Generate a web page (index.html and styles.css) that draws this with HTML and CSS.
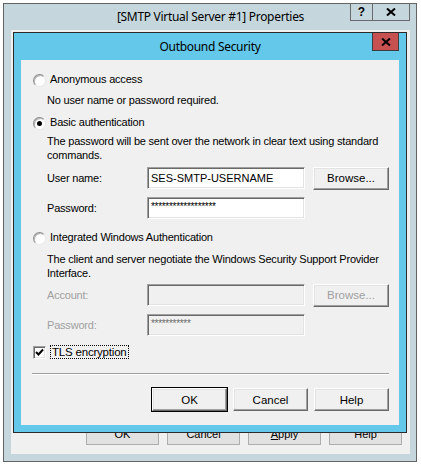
FILE: index.html
```html
<!DOCTYPE html>
<html lang="en">

<head>
  <meta charset="UTF-8">
  <meta name="viewport" content="width=device-width, initial-scale=1.0">
  <title>Outbound Security</title>
  <link rel="stylesheet" href="styles.css">
</head>

<body>
  <div class="desktop">

    <!-- Parent window: SMTP virtual server properties -->
    <div class="window props">
      <div class="titlebar">
        <span class="title">[SMTP Virtual Server #1] Properties</span>
        <div class="caption-btns">
          <span class="cap cap-help">?</span>
          <span class="cap cap-close">
            <svg width="10" height="8" viewBox="0 0 10 8"><path d="M1 0.5 L9 7.5 M9 0.5 L1 7.5" stroke="#000" stroke-width="2" fill="none"/></svg>
          </span>
        </div>
      </div>
      <div class="client">
        <div class="back-buttons">
          <button class="back-btn">OK</button>
          <button class="back-btn">Cancel</button>
          <button class="back-btn"><u>A</u>pply</button>
          <button class="back-btn">Help</button>
        </div>
      </div>
    </div>

    <!-- Modal: Outbound Security -->
    <div class="window dialog">
      <div class="dlg-titlebar">
        <span class="dlg-title">Outbound Security</span>
        <span class="dlg-close">
          <svg width="10" height="8" viewBox="0 0 10 8"><path d="M1 0.5 L9 7.5 M9 0.5 L1 7.5" stroke="#000" stroke-width="2" fill="none"/></svg>
        </span>
      </div>

      <div class="dlg-client">
        <div class="option first">
          <span class="radio"></span>
          <span>Anonymous access</span>
        </div>
        <p class="desc desc-anon">No user name or password required.</p>

        <div class="option basic">
          <span class="radio checked"></span>
          <span>Basic authentication</span>
        </div>
        <p class="desc desc-basic">The password will be sent over the network in clear text using standard commands.</p>

        <div class="field first-field">
          <label>User name:</label>
          <div class="textbox">SES-SMTP-USERNAME</div>
          <button class="btn">Browse...</button>
        </div>
        <div class="field">
          <label>Password:</label>
          <div class="textbox stars">******************</div>
        </div>

        <div class="option integrated">
          <span class="radio"></span>
          <span>Integrated Windows Authentication</span>
        </div>
        <p class="desc desc-int">The client and server negotiate the Windows Security Support Provider Interface.</p>

        <div class="field disabled first-field small-gap">
          <label>Account:</label>
          <div class="textbox"></div>
          <button class="btn" disabled>Browse...</button>
        </div>
        <div class="field disabled">
          <label>Password:</label>
          <div class="textbox stars">***********</div>
        </div>

        <div class="check-row">
          <span class="checkbox">
            <svg width="9" height="9" viewBox="0 0 9 9"><path d="M1 4 L3.5 6.5 L8 1.5" stroke="#000" stroke-width="2" fill="none"/></svg>
          </span>
          <span class="focus-label">TLS encryption</span>
        </div>

        <div class="separator"></div>

        <div class="dlg-buttons">
          <button class="btn default">OK</button>
          <button class="btn">Cancel</button>
          <button class="btn">Help</button>
        </div>
      </div>
    </div>

  </div>
</body>

</html>
```

FILE: styles.css
```css
body {
  margin: 0;
  background: #ffffff;
  font-family: 'Liberation Sans', Arial, sans-serif;
  font-size: 11px;
  color: #000;
}

.desktop {
  position: relative;
  width: 421px;
  height: 466px;
}

.window {
  box-sizing: border-box;
}

/* parent window */
.props {
  position: absolute;
  left: 3px;
  top: 3px;
  width: 414px;
  height: 459px;
  border: 1px solid #646464;
  background: #c5d7dd;
  padding: 0 6px 7px 7px;
  display: flex;
  flex-direction: column;
}

.titlebar {
  height: 26px;
  text-align: center;
  position: relative;
}

.title {
  font-family: 'Noto Sans', sans-serif;
  font-size: 12px;
  letter-spacing: -0.3px;
  line-height: 26px;
  color: #000;
}

.caption-btns {
  position: absolute;
  top: 0;
  right: 0;
  display: flex;
  height: 17px;
}

.cap {
  box-sizing: border-box;
  height: 17px;
  border: 1px solid #6a6a6a;
  border-top: none;
  display: flex;
  align-items: center;
  justify-content: center;
}

.cap-help {
  width: 23px;
  font-family: 'Liberation Sans', sans-serif;
  font-weight: bold;
  font-size: 12px;
}

.cap-close {
  width: 37px;
  border-left: none;
}

.client {
  flex: 1;
  background: #f0f0f0;
  display: flex;
  flex-direction: column;
  justify-content: flex-end;
  padding-bottom: 9px;
}

.back-buttons {
  display: flex;
  justify-content: flex-end;
  gap: 8px;
  padding-right: 8px;
}

.back-btn {
  width: 73px;
  height: 23px;
  background: #e1e1e1;
  border: 1px solid #adadad;
  font-family: 'Liberation Sans', sans-serif;
  font-size: 11px;
  padding: 0;
  color: #000;
}

/* modal dialog */
.dialog {
  position: absolute;
  left: 13px;
  top: 32px;
  width: 394px;
  height: 401px;
  border: 1px solid #2b2b2b;
  background: #63c8e9;
  padding: 0 7px 7px 7px;
}

.dlg-titlebar {
  height: 27px;
  position: relative;
  text-align: center;
}

.dlg-title {
  font-family: 'Noto Sans', sans-serif;
  font-size: 12px;
  letter-spacing: -0.3px;
  line-height: 27px;
}

.dlg-close {
  position: absolute;
  top: 0;
  right: 0;
  box-sizing: border-box;
  width: 27px;
  height: 18px;
  background: #c75050;
  border: 1px solid #3d3d3d;
  border-top: none;
  display: flex;
  align-items: center;
  justify-content: center;
}

.dlg-client {
  height: 365px;
  box-sizing: border-box;
  background: #f0f0f0;
  padding: 12px 10px 0 12px;
  letter-spacing: -0.2px;
}

.option {
  display: flex;
  align-items: center;
  height: 14px;
  gap: 4px;
}

.option.basic {
  margin-top: 8px;
}

.option.integrated {
  margin-top: 11px;
}

.radio {
  box-sizing: border-box;
  width: 13px;
  height: 13px;
  border-radius: 50%;
  border: 1px solid;
  border-color: #8c8c8c #e8e8e8 #e8e8e8 #8c8c8c;
  background: #fff;
  box-shadow: inset 1px 1px 0 #b4b4b4;
  margin-top: 2px;
  position: relative;
}

.radio.checked::after {
  content: "";
  position: absolute;
  left: 3px;
  top: 3px;
  width: 5px;
  height: 5px;
  border-radius: 50%;
  background: #000;
}

.desc {
  margin: 0;
  padding-left: 14px;
  line-height: 14px;
  width: 340px;
}

.desc-anon {
  margin-top: 7px;
}

.desc-basic {
  margin-top: 5px;
}

.desc-int {
  margin-top: 8px;
}

.field {
  display: flex;
  align-items: center;
  padding-left: 14px;
  margin-top: 8px;
  height: 22px;
}

.field.first-field {
  margin-top: 5px;
}

.field.small-gap {
  margin-top: 4px;
}

.field label {
  width: 100px;
}

.textbox {
  box-sizing: border-box;
  width: 158px;
  height: 22px;
  background: #fff;
  border: 1px solid;
  border-color: #a0a0a0 #ffffff #ffffff #a0a0a0;
  box-shadow: inset 1px 1px 0 #696969, inset -1px -1px 0 #e3e3e3;
  padding: 3px 3px 0 3px;
  line-height: 14px;
  font-size: 11px;
  letter-spacing: 0;
}

.textbox.stars {
  font-size: 10px;
  letter-spacing: -0.3px;
  line-height: 12px;
}

.btn {
  box-sizing: border-box;
  width: 76px;
  height: 23px;
  margin-left: 8px;
  background: #f0f0f0;
  border: 1px solid;
  border-color: #ffffff #696969 #696969 #ffffff;
  box-shadow: inset -1px -1px 0 #a0a0a0, inset 1px 1px 0 #e3e3e3;
  font-family: 'Liberation Sans', sans-serif;
  font-size: 11.5px;
  color: #000;
  padding: 0;
}

.field.disabled label,
.field.disabled .btn {
  color: #a0a0a0;
}

.field.disabled .textbox {
  background: #f0f0f0;
  color: #6d6d6d;
}

.check-row {
  display: flex;
  align-items: center;
  height: 14px;
  margin-top: 9px;
  gap: 4px;
}

.checkbox {
  box-sizing: border-box;
  width: 13px;
  height: 13px;
  background: #fff;
  border: 1px solid;
  border-color: #a0a0a0 #fff #fff #a0a0a0;
  box-shadow: inset 1px 1px 0 #696969, inset -1px -1px 0 #e3e3e3;
  display: flex;
  align-items: center;
  justify-content: center;
}

.focus-label {
  border: 1px dotted #000;
  padding: 0 1px;
  line-height: 12px;
  font-size: 11.5px;
}

.separator {
  margin: 14px 0 0 -1px;
  height: 1px;
  background: #a0a0a0;
  border-bottom: 1px solid #fff;
}

.dlg-buttons {
  display: flex;
  justify-content: flex-end;
  margin-top: 13px;
  gap: 6px;
}

.dlg-buttons .btn {
  width: 75px;
  margin-left: 0;
}

.btn.default {
  outline: 1px solid #000;
  outline-offset: 0;
}
```
